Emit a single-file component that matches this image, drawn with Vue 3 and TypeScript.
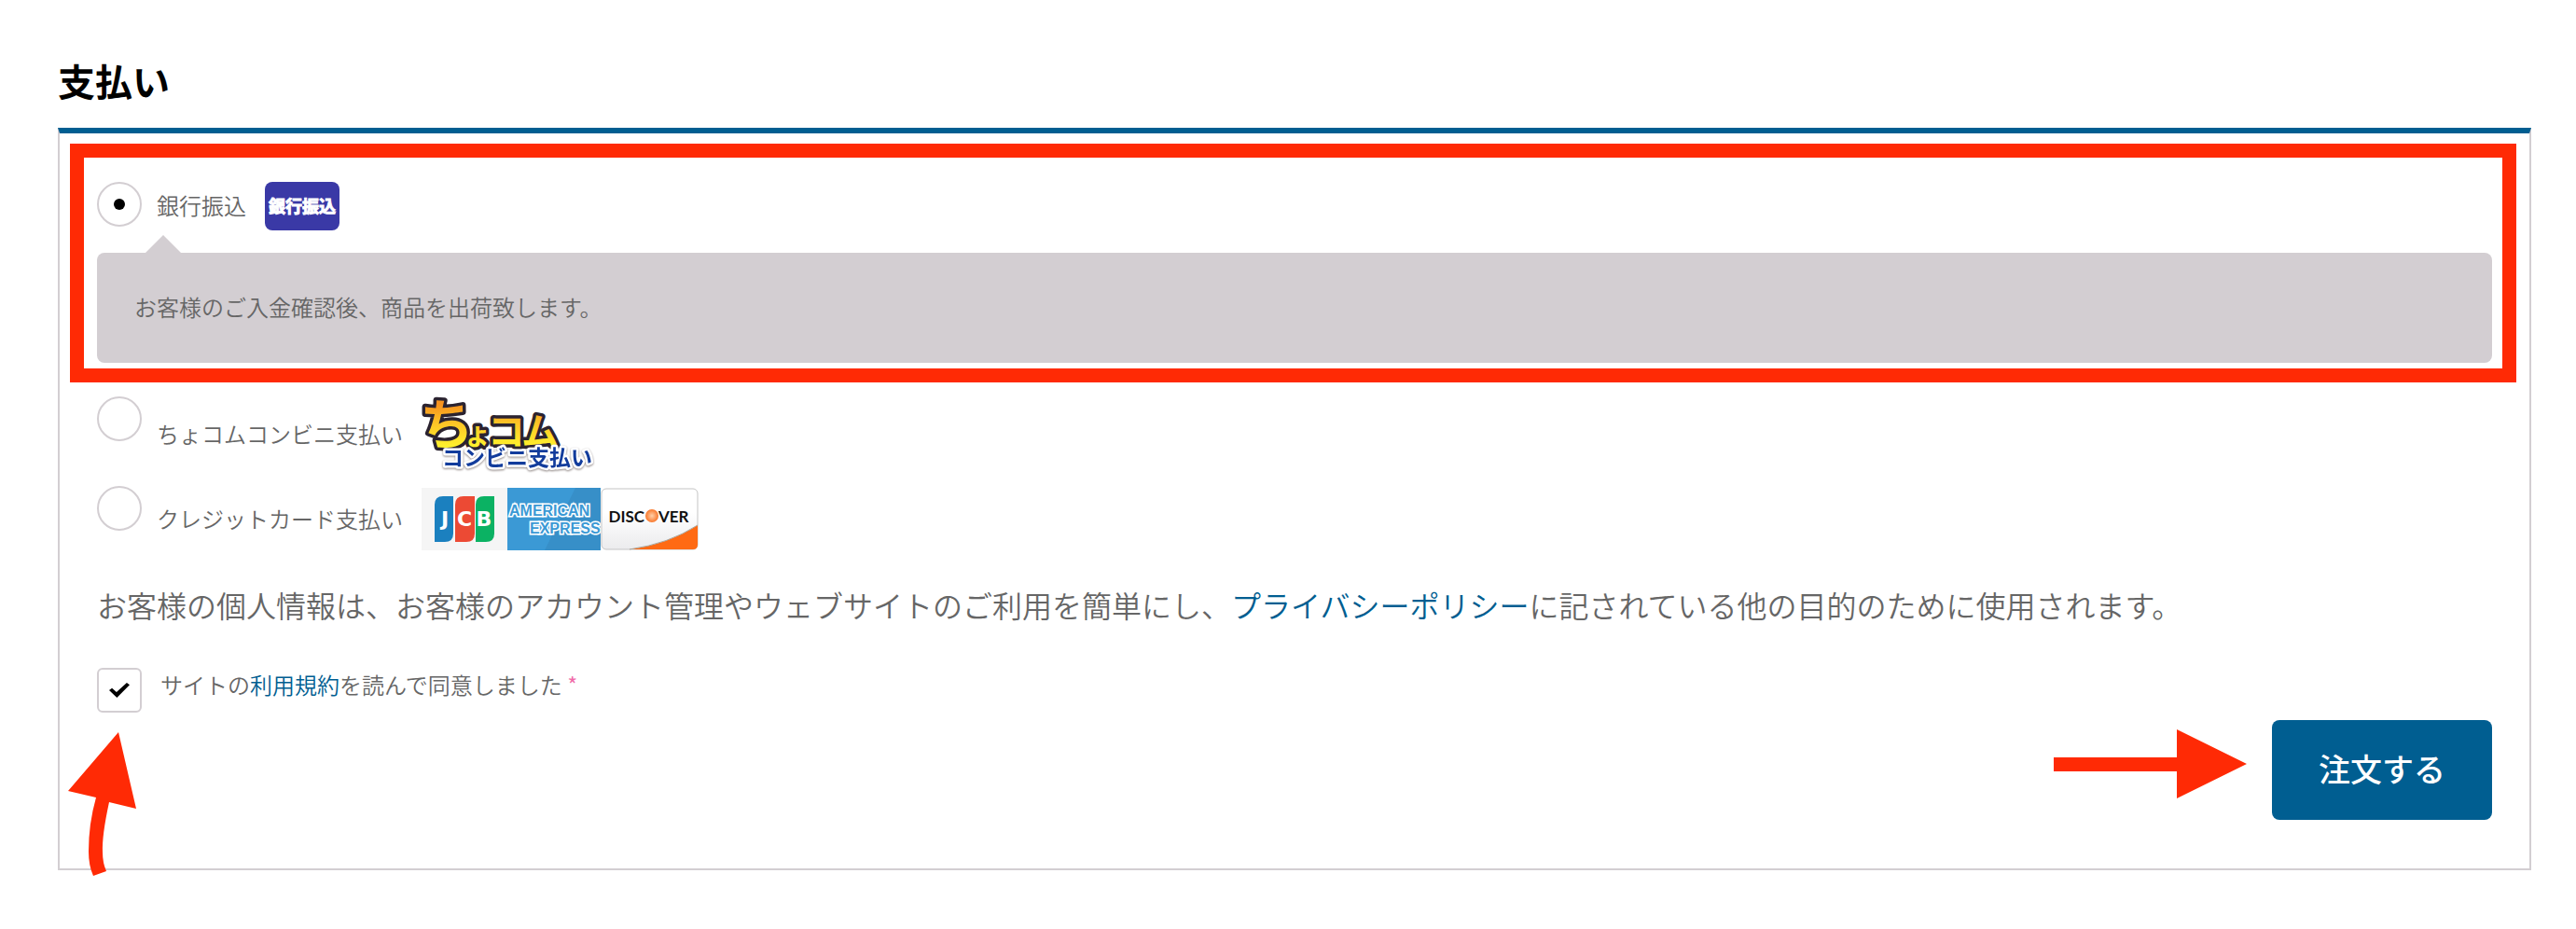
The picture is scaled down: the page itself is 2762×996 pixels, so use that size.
<script setup lang="ts">
import { ref } from 'vue'

type Method = 'bank' | 'chocom' | 'card'

const method = ref<Method>('bank')
const agreed = ref(true)
</script>

<template>
  <main class="checkout">
    <h2 class="title">支払い</h2>
    <form class="panel" @submit.prevent>
      <ul class="methods">
        <li class="method bank">
          <div class="row">
            <input id="pay-bank" v-model="method" class="radio" type="radio" name="payment" value="bank" />
            <label class="label" for="pay-bank">
              <span>銀行振込</span>
              <svg width="80" height="52" viewBox="0 0 80 52" aria-hidden="true">
                <rect width="80" height="52" rx="8" fill="#3a39a6" />
                <text class="badge-text" x="40" y="33" text-anchor="middle">銀行振込</text>
              </svg>
            </label>
          </div>
          <p v-show="method === 'bank'" class="note">お客様のご入金確認後、商品を出荷致します。</p>
          <span class="frame" aria-hidden="true"></span>
        </li>
        <li class="method">
          <div class="row">
            <input id="pay-chocom" v-model="method" class="radio" type="radio" name="payment" value="chocom" />
            <label class="label" for="pay-chocom">
              <span>ちょコムコンビニ支払い</span>
              <svg class="chocom" width="184" height="82" viewBox="0 0 184 82" aria-hidden="true">
                <defs>
                  <linearGradient id="gold" gradientUnits="userSpaceOnUse" x1="0" y1="4" x2="0" y2="54">
                    <stop offset="0.1" stop-color="#f7931e" />
                    <stop offset="0.5" stop-color="#fdc526" />
                    <stop offset="1" stop-color="#fff22d" />
                  </linearGradient>
                </defs>
                <g class="logo-gold">
                  <text x="-2" y="51" font-size="58">ち</text>
                  <text x="45" y="51" font-size="30">ょ</text>
                  <text x="71" y="52" font-size="40">コ</text>
                  <text x="107" y="52" font-size="40">ム</text>
                </g>
                <text class="logo-blue" x="22" y="74">コンビニ支払い</text>
              </svg>
            </label>
          </div>
        </li>
        <li class="method card">
          <div class="row">
            <input id="pay-card" v-model="method" class="radio" type="radio" name="payment" value="card" />
            <label class="label" for="pay-card">
              <span>クレジットカード支払い</span>
              <svg width="297" height="67" viewBox="0 0 297 67" aria-hidden="true">
                <defs>
                  <linearGradient id="paper" x1="0" y1="0" x2="0" y2="1">
                    <stop offset="0.4" stop-color="#ffffff" />
                    <stop offset="1" stop-color="#ebebed" />
                  </linearGradient>
                  <radialGradient id="sun">
                    <stop offset="0" stop-color="#ffd0a8" />
                    <stop offset="1" stop-color="#f9782c" />
                  </radialGradient>
                </defs>
                <rect width="92" height="67" fill="#f5f5f5" />
                <path d="M14 18q0-9 9-9h11v40q0 9-9 9H14z" fill="#1b80bf" />
                <path d="M36 18q0-9 9-9h12v40q0 9-9 9H36z" fill="#ec4a34" />
                <path d="M58 18q0-9 9-9h11v40q0 9-9 9H58z" fill="#0bb263" />
                <text class="jcb" x="25" y="41" text-anchor="middle">J</text>
                <text class="jcb" x="46" y="41" text-anchor="middle">C</text>
                <text class="jcb" x="67" y="41" text-anchor="middle">B</text>
                <rect x="92" width="100" height="67" fill="#3b99d5" />
                <path d="M165 0H192V67H132Z" fill="#378fc8" />
                <text class="amex" x="94" y="30">AMERICAN</text>
                <text class="amex" x="116" y="49">EXPRESS</text>
                <rect x="193" y="1" width="103" height="65" rx="5" fill="url(#paper)" stroke="#c5c5c5" />
                <path d="M223 66Q265 60 296 40V61Q296 66 291 66Z" fill="#ff6a13" />
                <path d="M223 66Q265 60 296 40" fill="none" stroke="#a9a9a0" />
                <text class="discover" x="239" y="37" text-anchor="end">DISC</text>
                <circle cx="247" cy="30" r="7" fill="url(#sun)" />
                <text class="discover" x="254" y="37">VER</text>
              </svg>
            </label>
          </div>
        </li>
      </ul>

      <p class="privacy">お客様の個人情報は、お客様のアカウント管理やウェブサイトのご利用を簡単にし、<a href="#privacy">プライバシーポリシー</a>に記されている他の目的のために使用されます。</p>

      <div class="terms">
        <input id="terms" v-model="agreed" class="check" type="checkbox" required />
        <label for="terms">サイトの<a href="#terms">利用規約</a>を読んで同意しました <span class="required">*</span></label>
        <svg class="arrow-up" width="74" height="156" viewBox="0 0 74 156" aria-hidden="true">
          <path d="M54 0L73 82L44 75Q36 112 37 129Q37 140 41 149L27 154Q22 143 22 128Q22 98 30 70L0 63Z" fill="#ff2a05" />
        </svg>
      </div>

      <div class="actions">
        <svg class="arrow-right" width="207" height="76" viewBox="0 0 207 76" aria-hidden="true">
          <path d="M0 31H132V1L207 38L132 75V46H0Z" fill="#ff2a05" />
        </svg>
        <button class="submit" type="submit">注文する</button>
      </div>
    </form>
  </main>
</template>

<style>
body {
  margin: 0;
  background: #fff;
}
</style>

<style scoped>
.checkout {
  box-sizing: border-box;
  padding: 56px 48px 63px 62px;
  font-family: "Noto Sans CJK JP", sans-serif;
  font-weight: 350;
  font-size: 24px;
  line-height: 40px;
  color: #666;
}
.title {
  margin: 0 0 21px;
  font-size: 40px;
  line-height: 60px;
  font-weight: 700;
  color: #000;
}
.panel {
  border: 2px solid #d3ced2;
  border-top: 6px solid #005e91;
  padding: 52px 40px;
}
.methods {
  list-style: none;
  margin: 0;
  padding: 0;
  display: flex;
  flex-direction: column;
  gap: 14px;
}
.method {
  position: relative;
}
.bank {
  margin-bottom: 22px;
}
.row {
  display: flex;
  gap: 16px;
}
.label {
  display: flex;
  align-items: center;
  gap: 20px;
}
.label span {
  padding-bottom: 2px;
}
.card .label {
  padding-top: 2px;
}
.label svg {
  display: block;
}
.radio,
.check {
  appearance: none;
  box-sizing: border-box;
  flex: none;
  width: 48px;
  height: 48px;
  margin: 0;
  border: 2px solid #d3ced2;
  background: #fff;
  display: grid;
  place-items: center;
}
.radio {
  border-radius: 50%;
}
.radio:checked::before {
  content: "";
  width: 12px;
  height: 12px;
  border-radius: 50%;
  background: #000;
}
.check {
  border-radius: 6px;
}
.check:checked::before {
  content: "";
  width: 22px;
  height: 16px;
  background: #000;
  clip-path: polygon(0 50%, 14% 36%, 36% 62%, 86% 0, 100% 14%, 38% 100%);
}
.note {
  position: relative;
  margin: 24px 0 0;
  padding: 38px 40px 40px;
  border-radius: 8px;
  background: #d3ced2;
}
.note::before {
  content: "";
  position: absolute;
  left: 52px;
  top: -19px;
  width: 38px;
  height: 19px;
  background: #d3ced2;
  clip-path: polygon(50% 0, 100% 100%, 0 100%);
}
.frame {
  position: absolute;
  inset: -41px -26px -21px -29px;
  border: 15px solid #ff2a05;
  pointer-events: none;
}
.privacy {
  margin: 34px 0 44px;
  font-size: 32px;
  line-height: 48px;
}
a {
  color: #005e91;
  text-decoration: none;
}
.terms {
  position: relative;
  display: flex;
  gap: 20px;
  margin-bottom: 8px;
}
.terms label {
  line-height: 36px;
}
.required {
  color: #f06aa8;
}
.arrow-up {
  position: absolute;
  left: -31px;
  top: 69px;
}
.actions {
  display: flex;
  justify-content: flex-end;
  align-items: flex-start;
  gap: 27px;
}
.arrow-right {
  margin-top: 9px;
}
.submit {
  border: 0;
  border-radius: 8px;
  padding: 28px 50px 31px;
  background: #005e91;
  color: #fff;
  font-family: inherit;
  font-size: 34px;
  line-height: 48px;
  font-weight: 500;
}
.badge-text {
  font-size: 18px;
  font-weight: 700;
  fill: #fff;
  stroke: #fff;
}
.chocom {
  overflow: visible;
}
.logo-gold {
  font-weight: 700;
  fill: url(#gold);
  stroke: #2b2330;
  stroke-width: 7px;
  stroke-linejoin: round;
  paint-order: stroke;
}
.logo-blue {
  font-size: 23px;
  font-weight: 700;
  fill: #123c9c;
  stroke: #fff;
  stroke-width: 5px;
  stroke-linejoin: round;
  paint-order: stroke;
  filter: drop-shadow(0 1px 1px #8d8482);
}
.jcb {
  font-family: "DejaVu Sans", sans-serif;
  font-size: 22px;
  font-weight: 700;
  fill: #fff;
}
.amex {
  font-family: "Liberation Sans", sans-serif;
  font-size: 16px;
  font-weight: 700;
  fill: #3b99d5;
  stroke: #fff;
  stroke-width: 3px;
  paint-order: stroke;
}
.discover {
  font-family: Lato, sans-serif;
  font-size: 17px;
  font-weight: 700;
  fill: #111;
}
</style>
